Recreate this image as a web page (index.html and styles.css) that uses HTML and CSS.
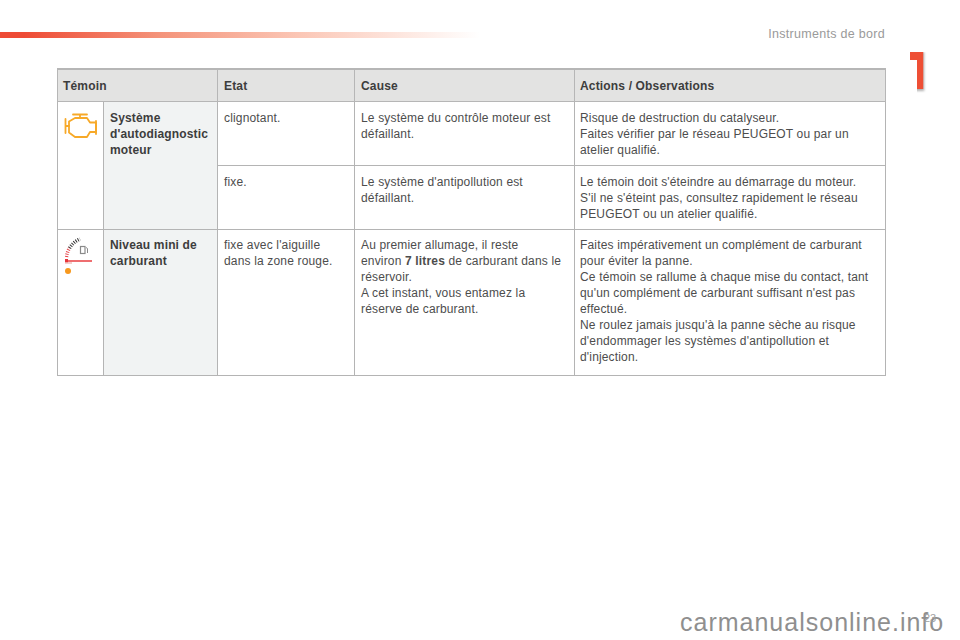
FILE: index.html
```html
<!DOCTYPE html>
<html lang="fr">
<head>
<meta charset="utf-8">
<title>Instruments de bord</title>
<link rel="stylesheet" href="styles.css">
</head>
<body>
<div class="page">
  <div class="topbar"></div>
  <div class="section-title">Instruments de bord</div>
  <div class="chapter">1</div>
  <table class="grid">
    <colgroup>
      <col class="c1"><col class="c2"><col class="c3"><col class="c4"><col class="c5">
    </colgroup>
    <thead>
      <tr class="head">
        <th colspan="2" class="first">Témoin</th><th>Etat</th><th>Cause</th><th class="last">Actions / Observations</th>
      </tr>
    </thead>
    <tbody>
      <tr class="r1">
        <td rowspan="2" class="icon">
          <svg class="engine" width="34" height="26" viewBox="0 0 34 26" fill="none" stroke="#f7a928" stroke-width="1.800" stroke-linejoin="round" stroke-linecap="round">
            <path d="M9 1.500H23M16 1.500V5"/>
            <path d="M1.500 6V20M1.500 13H5"/>
            <path d="M5 8.500L11 5H23L26 9.500H32V19H26L23 24H11L5 19.500Z"/>
            <path d="M32 8V21"/>
          </svg>
        </td>
        <td rowspan="2" class="name">Système d'autodiagnostic moteur</td>
        <td>clignotant.</td>
        <td>Le système du contrôle moteur est<br>défaillant.</td>
        <td class="last">Risque de destruction du catalyseur.<br>Faites vérifier par le réseau PEUGEOT ou par un<br>atelier qualifié.</td>
      </tr>
      <tr class="r2">
        <td>fixe.</td>
        <td>Le système d'antipollution est<br>défaillant.</td>
        <td class="last">Le témoin doit s'éteindre au démarrage du moteur.<br>S'il ne s'éteint pas, consultez rapidement le réseau<br>PEUGEOT ou un atelier qualifié.</td>
      </tr>
      <tr class="r3">
        <td class="icon">
          <svg class="gauge" width="30" height="40" viewBox="0 0 30 40" fill="none">
            <path d="M1.500 21A23 23 0 0 1 4.500 12" stroke="#e8444a" stroke-width="3.500" stroke-dasharray="1 1.300"/>
            <path d="M4.500 12A23 23 0 0 1 15 3" stroke="#333" stroke-width="3.500" stroke-dasharray="1 1.300"/>
            <rect x="15.500" y="10.500" width="4.500" height="7" stroke="#8a8a8a" stroke-width="1.200"/>
            <path d="M21 11.500L22.500 12.500V17" stroke="#8a8a8a" stroke-width="1"/>
            <path d="M0 25H27" stroke="#ea4a4c" stroke-width="1.600"/>
            <rect x="0" y="23" width="3" height="3.500" fill="#e8343a"/>
            <path d="M0 27H7" stroke="#eeb0aa" stroke-width="1.200"/>
            <circle cx="3" cy="35" r="3" fill="#f7981d"/>
          </svg>
        </td>
        <td class="name">Niveau mini de<br>carburant</td>
        <td>fixe avec l'aiguille<br>dans la zone rouge.</td>
        <td>Au premier allumage, il reste<br>environ <b>7 litres</b> de carburant dans le<br>réservoir.<br>A cet instant, vous entamez la<br>réserve de carburant.</td>
        <td class="last">Faites impérativement un complément de carburant<br>pour éviter la panne.<br>Ce témoin se rallume à chaque mise du contact, tant<br>qu'un complément de carburant suffisant n'est pas<br>effectué.<br>Ne roulez jamais jusqu'à la panne sèche au risque<br>d'endommager les systèmes d'antipollution et<br>d'injection.</td>
      </tr>
    </tbody>
  </table>
  <div class="mark">carmanualsonline.info</div>
  <div class="pageno">23</div>
</div>
</body>
</html>
```
FILE: styles.css
```css
html, body { margin: 0; padding: 0; background: #fff; }
.page {
  position: relative;
  width: 960px;
  height: 640px;
  overflow: hidden;
  font-family: "Liberation Sans", Arial, sans-serif;
  color: #4d4d4d;
}
.topbar {
  position: absolute;
  left: 0; top: 32px;
  width: 480px; height: 6px;
  background: linear-gradient(90deg, #ee4b35 0, #ee4b35 5%, #f4937a 33%, #fbc6b5 62%, #ffffff 100%);
}
.section-title {
  position: absolute;
  right: 75px; top: 27px;
  font-size: 12.500px;
  letter-spacing: 0.300px;
  color: #9a9a9a;
}
.chapter {
  position: absolute;
  left: 901px; top: 41px;
  width: 29px;
  font-family: Roboto, "Liberation Sans", sans-serif;
  font-size: 52px;
  line-height: 60px;
  font-weight: 900;
  color: #ee4f35;
  -webkit-text-stroke: 2px #ee4f35;
  filter: drop-shadow(1px 2px 1px rgba(0,0,0,.3));
  clip-path: polygon(9px 11px, 100% 11px, 100% 100%, 16px 100%, 16px 19px, 9px 19px);
}
.chapter::before {
  content: "";
  position: absolute;
  left: 9px; top: 11px;
  width: 9px; height: 8px;
  background: #ee4f35;
}
.grid {
  position: absolute;
  left: 57px; top: 68px;
  width: 828px;
  border-collapse: collapse;
  table-layout: fixed;
  font-size: 12px;
  line-height: 16px;
  letter-spacing: 0.160px;
}
.c1 { width: 46px; }
.c2 { width: 114px; }
.c3 { width: 137px; }
.c4 { width: 220px; }
.c5 { width: 311px; }
.grid th, .grid td {
  border: 1px solid #a9a9a9;
  vertical-align: top;
  text-align: left;
  padding: 8px 6px 0;
}
.grid td { border-color: #b4b4b4; }
.grid .last { padding-left: 5px; }
.head { height: 32px; background: #e3e3e2; }
.head th { font-weight: bold; color: #3d3d3d; padding-top: 8px; border-top-width: 2px; border-color: #b6b6b6; }
.head .first { padding-left: 5px; }
.r1 { height: 64px; }
.r2 { height: 64px; }
.r3 { height: 146px; }
.r3 td { padding-top: 7px; }
.grid td.name { background: #f1f3f3; font-weight: bold; color: #3d3d3d; padding-left: 6px; padding-right: 0; }
.grid td.icon { padding: 0; position: relative; }
.engine { position: absolute; left: 6px; top: 11px; }
.gauge { position: absolute; left: 7px; top: 6px; }
.mark {
  position: absolute;
  left: 680px; top: 608px;
  font-size: 25px;
  letter-spacing: 1px;
  color: #8f8f8f;
  white-space: nowrap;
}
.pageno {
  position: absolute;
  left: 924px; top: 612px;
  font-size: 11px;
  color: #a0a0a0;
}
```
